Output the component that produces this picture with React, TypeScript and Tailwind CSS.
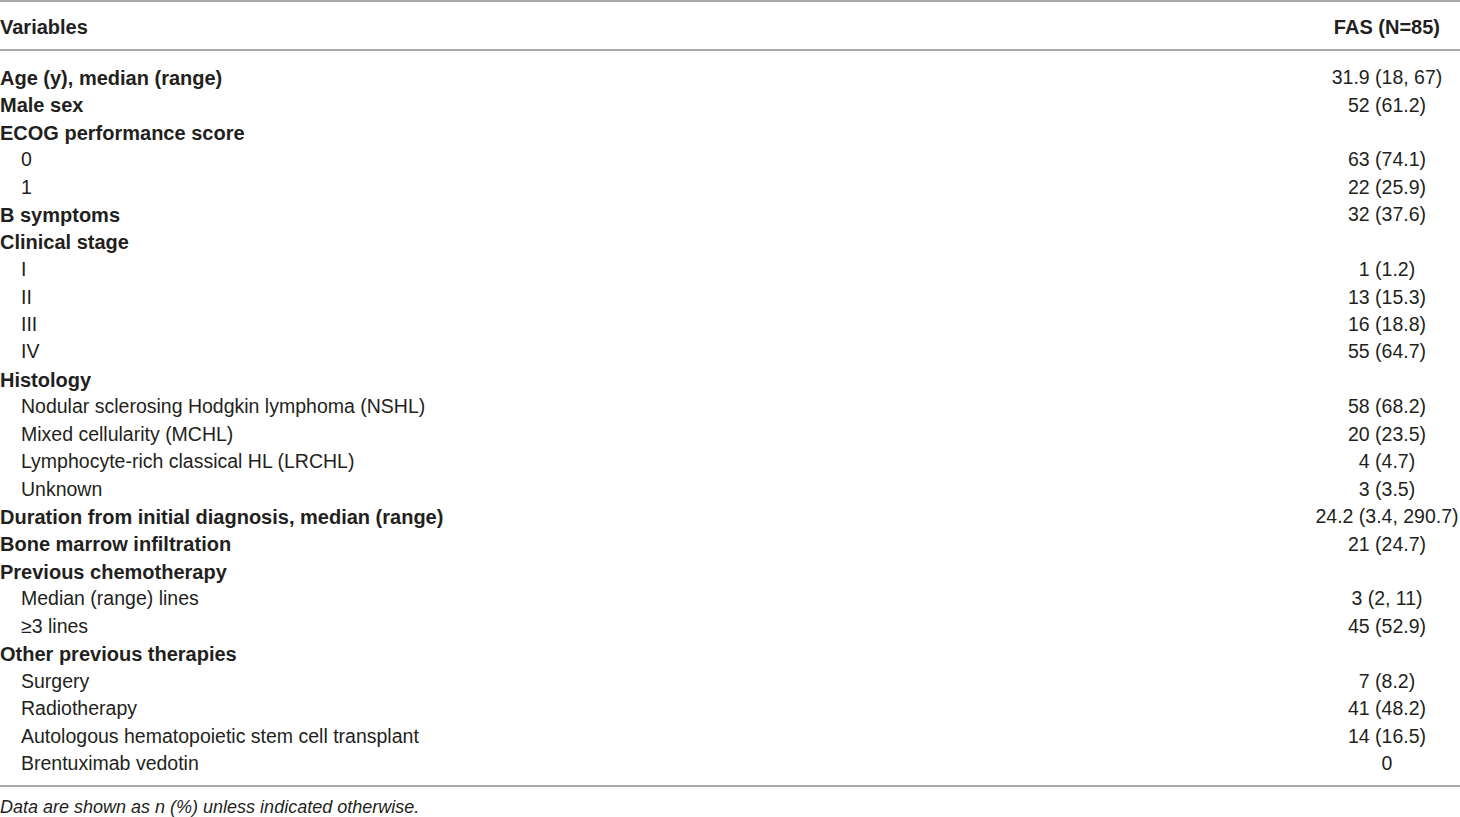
import React from 'react';

type Row = {
  label: string;
  value?: string;
  heading?: boolean;
};

const rows: Row[] = [
  { label: 'Age (y), median (range)', value: '31.9 (18, 67)', heading: true },
  { label: 'Male sex', value: '52 (61.2)', heading: true },
  { label: 'ECOG performance score', heading: true },
  { label: '0', value: '63 (74.1)' },
  { label: '1', value: '22 (25.9)' },
  { label: 'B symptoms', value: '32 (37.6)', heading: true },
  { label: 'Clinical stage', heading: true },
  { label: 'I', value: '1 (1.2)' },
  { label: 'II', value: '13 (15.3)' },
  { label: 'III', value: '16 (18.8)' },
  { label: 'IV', value: '55 (64.7)' },
  { label: 'Histology', heading: true },
  { label: 'Nodular sclerosing Hodgkin lymphoma (NSHL)', value: '58 (68.2)' },
  { label: 'Mixed cellularity (MCHL)', value: '20 (23.5)' },
  { label: 'Lymphocyte-rich classical HL (LRCHL)', value: '4 (4.7)' },
  { label: 'Unknown', value: '3 (3.5)' },
  { label: 'Duration from initial diagnosis, median (range)', value: '24.2 (3.4, 290.7)', heading: true },
  { label: 'Bone marrow infiltration', value: '21 (24.7)', heading: true },
  { label: 'Previous chemotherapy', heading: true },
  { label: 'Median (range) lines', value: '3 (2, 11)' },
  { label: '≥3 lines', value: '45 (52.9)' },
  { label: 'Other previous therapies', heading: true },
  { label: 'Surgery', value: '7 (8.2)' },
  { label: 'Radiotherapy', value: '41 (48.2)' },
  { label: 'Autologous hematopoietic stem cell transplant', value: '14 (16.5)' },
  { label: 'Brentuximab vedotin', value: '0' }
];

const TableRow = ({ label, value, heading }: Row): JSX.Element => (
  <div className="flex h-[27.44px] items-center">
    <div className={heading ? 'flex-1 font-bold text-[20px]' : 'flex-1 pl-[21px]'}>{label}</div>
    <div className="w-[146px] text-center">{value}</div>
  </div>
);

export default function App() {
  return (
    <div className="w-[1460px] h-[817px] bg-white text-[#231f20] font-['Liberation_Sans',Arial,sans-serif] text-[19.5px]">
      <div className="border-t-2 border-b-2 border-[#a7a9ac] flex h-[51px] items-center pt-[3px] font-bold text-[20px]">
        <div className="flex-1">Variables</div>
        <div className="w-[146px] text-right pr-[20px]">FAS (N=85)</div>
      </div>
      <div className="pt-[13px] pb-[8px] border-b-2 border-[#a7a9ac]">
        {rows.map((row, index) => (
          <TableRow key={`row-${index}`} {...row} />
        ))}
      </div>
      <div className="pt-[7px] text-[18px] italic">Data are shown as n (%) unless indicated otherwise.</div>
    </div>
  );
}
